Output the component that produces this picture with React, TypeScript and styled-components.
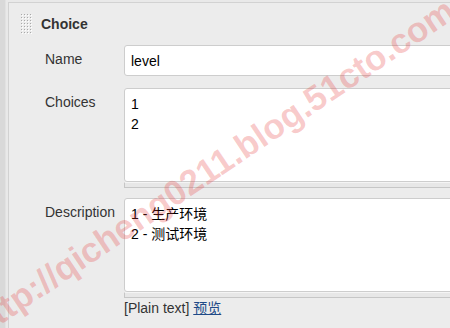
import styled, { createGlobalStyle } from "styled-components";

const GlobalStyle = createGlobalStyle`
  html, body {
    margin: 0;
    padding: 0;
    overflow: hidden;
    background: #e9e9e9;
  }
  body {
    font-family: "Liberation Sans", Arial, "Noto Sans CJK SC", sans-serif;
  }
`;

const Page = styled.div`
  position: relative;
  display: flex;
  width: 490px;
  height: 328px;
  background: #e9e9e9;
`;

const SideStrip = styled.div`
  width: 5px;
  flex: none;
  background: #d9d9d9;
  border-right: 1px solid #e2e2e2;
`;

const Panel = styled.section`
  flex: 1;
  margin: 2px 0 0 2px;
  padding-top: 11px;
  background: #ececec;
  border-top: 1px solid #d2d2d2;
  border-left: 1px solid #d2d2d2;
`;

const Header = styled.div`
  display: flex;
  align-items: center;
  gap: 8px;
  padding-left: 12px;
  height: 20px;
`;

const Title = styled.h3`
  margin: 0;
  font-size: 14px;
  font-weight: bold;
  color: #333;
`;

const Form = styled.div`
  display: grid;
  grid-template-columns: 115px 1fr;
  margin-top: 11px;
`;

const Label = styled.div`
  padding: 6px 0 0 36px;
  font-size: 14px;
  line-height: 17px;
  color: #333;
`;

const Field = styled.div<{ $gap?: number }>`
  margin-bottom: ${(p) => p.$gap ?? 0}px;
`;

const TextInput = styled.div`
  box-sizing: border-box;
  height: 31px;
  padding: 0 6px;
  background: #fff;
  border: 1px solid #cdcdcd;
  border-radius: 3px;
  font-size: 14px;
  line-height: 30px;
  color: #000;
`;

const TextArea = styled.div<{ $height: number }>`
  box-sizing: border-box;
  height: ${(p) => p.$height}px;
  padding: 5px 6px;
  background: #fff;
  border: 1px solid #cdcdcd;
  border-radius: 3px 3px 0 3px;
  font-size: 14px;
  line-height: 20px;
  color: #000;
  white-space: pre;
`;

const Handle = styled.div`
  height: 4px;
  background: #e7e7e7;
  border-top: 1px solid #f4f4f4;
  border-bottom: 1px solid #c6c6c6;
  border-left: 1px solid #c6c6c6;
`;

const Hint = styled.div`
  padding-top: 2px;
  font-size: 14px;
  line-height: 17px;
  color: #333;
`;

const PreviewLink = styled.a`
  color: #204a87;
  text-decoration: underline;
  cursor: pointer;
`;

const Watermark = styled.div`
  position: absolute;
  left: 213px;
  top: 167px;
  transform: translate(-50%, -50%) rotate(-34deg);
  white-space: nowrap;
  font-family: "Liberation Sans", Arial, sans-serif;
  font-size: 35px;
  font-weight: bold;
  color: rgba(228, 50, 50, 0.26);
  pointer-events: none;
`;

const Grip = () => {
  const dots = [];
  for (let r = 0; r < 7; r++) {
    for (let c = 0; c < 4; c++) {
      dots.push(
        <g key={`${r}-${c}`}>
          <rect x={c * 3 + 1} y={r * 3 + 1} width="1" height="1" fill="#fff" />
          <rect x={c * 3} y={r * 3} width="1" height="1" fill="#a9a9a9" />
        </g>
      );
    }
  }
  return (
    <svg width="12" height="21" viewBox="0 0 12 21">
      {dots}
    </svg>
  );
};

export default function App() {
  return (
    <>
      <GlobalStyle />
      <Page>
        <SideStrip />
        <Panel>
          <Header>
            <Grip />
            <Title>Choice</Title>
          </Header>
          <Form>
            <Label>Name</Label>
            <Field $gap={12}>
              <TextInput>level</TextInput>
            </Field>

            <Label>Choices</Label>
            <Field $gap={10}>
              <TextArea $height={94}>{"1\n2"}</TextArea>
              <Handle />
            </Field>

            <Label>Description</Label>
            <Field>
              <TextArea $height={94}>{"1 - 生产环境\n2 - 测试环境"}</TextArea>
              <Handle />
              <Hint>
                [Plain text] <PreviewLink>预览</PreviewLink>
              </Hint>
            </Field>
          </Form>
        </Panel>
        <Watermark>http://qicheng0211.blog.51cto.com</Watermark>
      </Page>
    </>
  );
}
